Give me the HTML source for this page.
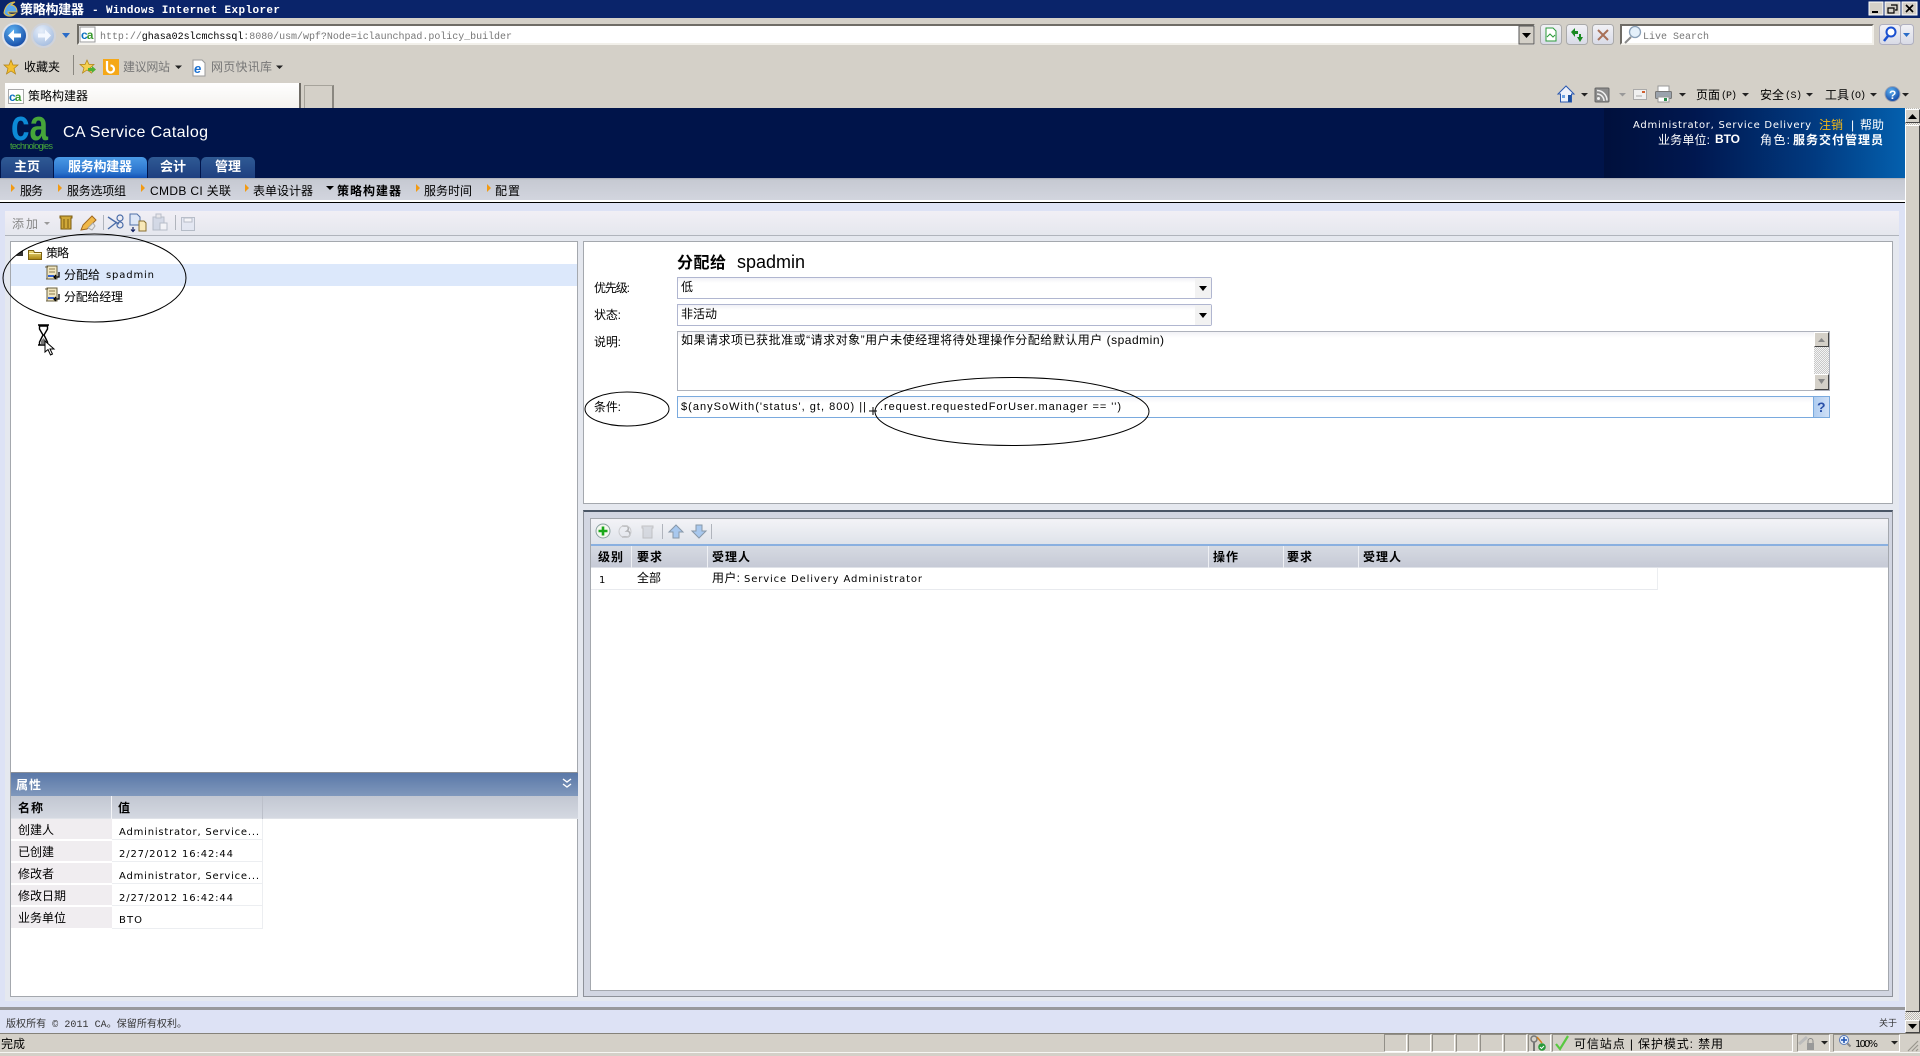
<!DOCTYPE html>
<html lang="zh"><head><meta charset="utf-8"><title>策略构建器</title>
<style>
html,body{margin:0;padding:0;width:1920px;height:1056px;overflow:hidden;background:#d4d0c8}
div{position:absolute;box-sizing:border-box}
svg{position:absolute;left:0;top:0}
text{font-family:"Liberation Sans","WenQuanYi Zen Hei","Noto Sans CJK SC",sans-serif;font-size:12px;fill:#000;white-space:pre}
.m{font-family:"Liberation Mono","WenQuanYi Zen Hei",monospace}
.d{font-family:"DejaVu Sans","WenQuanYi Zen Hei",sans-serif;font-size:10px}
.b{font-weight:bold}.w{fill:#fff}.g{fill:#777}
</style></head><body>
<!-- window chrome -->
<div style="left:0;top:0;width:1920px;height:18px;background:#0a246a"></div>
<div style="left:77px;top:24px;width:1458px;height:21px;background:#fff;border:2px solid #6f6c66;border-right-color:#f2f0ea;border-bottom-color:#f2f0ea"></div>
<div style="left:1620px;top:24px;width:254px;height:21px;background:#fff;border:2px solid #6f6c66;border-right-color:#f2f0ea;border-bottom-color:#f2f0ea"></div>
<div style="left:5px;top:83px;width:296px;height:25px;background:linear-gradient(#fff,#f4f2ee);border-right:2px solid #6f6c66"></div>
<div style="left:304px;top:85px;width:30px;height:23px;border:1px solid #a6a39b;border-bottom:0;border-right:2px solid #8a8780"></div>
<!-- header -->
<div style="left:0;top:108px;width:1905px;height:70px;background:#00144a"></div>
<div style="left:1604px;top:108px;width:301px;height:70px;background:linear-gradient(90deg,#00103c 0,#00174f 30%,#013a80 70%,#0460ae 100%)"></div>
<div style="left:1px;top:157px;width:52px;height:21px;background:linear-gradient(#2f5a94,#1e3f80);border-radius:5px 5px 0 0"></div>
<div style="left:54px;top:157px;width:93px;height:21px;background:linear-gradient(#4a9ae6,#2a72cc 75%,#1250b4);border-radius:5px 5px 0 0"></div>
<div style="left:148px;top:157px;width:52px;height:21px;background:linear-gradient(#2f5a94,#1e3f80);border-radius:5px 5px 0 0"></div>
<div style="left:201px;top:157px;width:54px;height:21px;background:linear-gradient(#2f5a94,#1e3f80);border-radius:5px 5px 0 0"></div>
<!-- sub nav -->
<div style="left:0;top:178px;width:1905px;height:22px;background:linear-gradient(#a8abb4 0,#c6c9d2 8%,#d2d5de 100%)"></div>
<div style="left:0;top:200px;width:1905px;height:2px;background:#fff"></div>
<div style="left:0;top:202px;width:1905px;height:1px;background:#000"></div>
<div style="left:0;top:203px;width:1905px;height:830px;background:#dde2f5"></div>
<!-- content -->
<div style="left:5px;top:211px;width:1894px;height:790px;background:#e5e8ef"></div>
<div style="left:5px;top:211px;width:1894px;height:25px;background:linear-gradient(#f1eff5,#e5e7ee);border-bottom:1px solid #b0b4bc"></div>
<!-- tree panel -->
<div style="left:10px;top:241px;width:568px;height:756px;background:#fff;border:1px solid #a4a8ae"></div>
<div style="left:11px;top:264px;width:566px;height:22px;background:#dce8fb"></div>
<div style="left:11px;top:772px;width:567px;height:24px;background:linear-gradient(#5a78a8,#8098bc);border-top:1px solid #8a8f98"></div>
<div style="left:11px;top:796px;width:567px;height:23px;background:linear-gradient(#c2c7d2,#d4d8e1);border-bottom:1px solid #dfe2e8"></div>
<div style="left:12px;top:796px;width:100px;height:23px;border-right:1px solid #f4f5f8"></div>
<div style="left:112px;top:796px;width:151px;height:23px;border-right:1px solid #bcc0ca"></div>
<div style="left:11px;top:819px;width:101px;height:22px;background:#f0edf0;border-bottom:2px solid #fff"></div>
<div style="left:11px;top:841px;width:101px;height:22px;background:#f0edf0;border-bottom:2px solid #fff"></div>
<div style="left:11px;top:863px;width:101px;height:22px;background:#f0edf0;border-bottom:2px solid #fff"></div>
<div style="left:11px;top:885px;width:101px;height:22px;background:#f0edf0;border-bottom:2px solid #fff"></div>
<div style="left:11px;top:907px;width:101px;height:21px;background:#f0edf0"></div>
<div style="left:112px;top:819px;width:151px;height:110px;border-right:1px solid #eceef1;border-bottom:1px solid #eceef1;background:linear-gradient(#fff 20px,#eceef1 20px,#eceef1 21px,#fff 21px,#fff 42px,#eceef1 42px,#eceef1 43px,#fff 43px,#fff 64px,#eceef1 64px,#eceef1 65px,#fff 65px,#fff 86px,#eceef1 86px,#eceef1 87px,#fff 87px)"></div>
<!-- right top panel -->
<div style="left:583px;top:241px;width:1310px;height:263px;background:#fff;border:1px solid #a4a8ae"></div>
<div style="left:677px;top:277px;width:535px;height:22px;background:linear-gradient(#f1f1f6,#fff 5px);border:1px solid #b0b6d0;border-radius:0 2px 2px 0"></div>
<div style="left:1195px;top:278px;width:16px;height:20px;background:#f2f2f2"></div>
<div style="left:677px;top:304px;width:535px;height:22px;background:linear-gradient(#f1f1f6,#fff 5px);border:1px solid #b0b6d0;border-radius:0 2px 2px 0"></div>
<div style="left:1195px;top:305px;width:16px;height:20px;background:#f2f2f2"></div>
<div style="left:677px;top:331px;width:1153px;height:60px;background:linear-gradient(#f2f2f6,#fff 6px);border:1px solid #aeb2bc"></div>
<div style="left:1814px;top:332px;width:15px;height:58px;background:repeating-conic-gradient(#c8c8c8 0 25%,#f4f4f4 0 50%) 0 0/2px 2px"></div>
<div style="left:1814px;top:332px;width:15px;height:15px;background:#d4d0c8;border:1px solid;border-color:#fff #444 #444 #fff"></div>
<div style="left:1814px;top:374px;width:15px;height:16px;background:#d4d0c8;border:1px solid;border-color:#fff #444 #444 #fff"></div>
<div style="left:677px;top:396px;width:1153px;height:22px;background:linear-gradient(#f2f3f8,#fff 6px);border:1px solid #7aaade"></div>
<div style="left:1813px;top:396px;width:17px;height:22px;background:linear-gradient(90deg,#b0cdf0,#d0e0f6);border:1px solid #7aaade"></div>
<!-- right bottom panel -->
<div style="left:583px;top:510px;width:1310px;height:487px;background:#d2d6e2;border:1px solid #8e929a;border-top:2px solid #4a5666"></div>
<div style="left:590px;top:518px;width:1299px;height:473px;background:#fff;border:1px solid #a4a8ae"></div>
<div style="left:591px;top:519px;width:1297px;height:25px;background:linear-gradient(#f3f3f7,#dfe3ea)"></div>
<div style="left:591px;top:544px;width:1297px;height:2px;background:#8ab0e0"></div>
<div style="left:591px;top:546px;width:1297px;height:22px;background:linear-gradient(#d6dae2,#c6cad6);border-bottom:1px solid #dfe2e8"></div>
<div style="left:631px;top:546px;width:1px;height:22px;background:#eef0f4"></div>
<div style="left:707px;top:546px;width:1px;height:22px;background:#eef0f4"></div>
<div style="left:1208px;top:546px;width:1px;height:22px;background:#eef0f4"></div>
<div style="left:1283px;top:546px;width:1px;height:22px;background:#eef0f4"></div>
<div style="left:1358px;top:546px;width:1px;height:22px;background:#eef0f4"></div>
<div style="left:591px;top:568px;width:1067px;height:22px;border-bottom:1px solid #e8eaee;border-right:1px solid #eceef1"></div>
<!-- footer -->
<div style="left:0;top:1007px;width:1905px;height:3px;background:#98989c"></div>
<!-- page scrollbar -->
<div style="left:1905px;top:108px;width:15px;height:925px;background:repeating-conic-gradient(#bcb9b2 0 25%,#f2f1ee 0 50%) 0 0/2px 2px"></div>
<div style="left:1905px;top:109px;width:15px;height:14px;background:#d4d0c8;border:1px solid;border-color:#fff #444 #444 #fff"></div>
<div style="left:1905px;top:125px;width:15px;height:887px;background:#d4d0c8;border:1px solid;border-color:#fff #444 #444 #fff"></div>
<div style="left:1905px;top:1020px;width:15px;height:13px;background:#d4d0c8;border:1px solid;border-color:#fff #444 #444 #fff"></div>
<!-- status bar -->
<div style="left:0;top:1033px;width:1920px;height:23px;background:#d4d0c8;border-top:1px solid #85827a"></div>
<div style="left:0;top:1052px;width:1920px;height:1px;background:#f6f5f2"></div>
<div style="left:1384px;top:1034px;width:23px;height:18px;border:1px solid;border-color:#928f88 #fff #fff #928f88"></div>
<div style="left:1408px;top:1034px;width:23px;height:18px;border:1px solid;border-color:#928f88 #fff #fff #928f88"></div>
<div style="left:1432px;top:1034px;width:23px;height:18px;border:1px solid;border-color:#928f88 #fff #fff #928f88"></div>
<div style="left:1456px;top:1034px;width:23px;height:18px;border:1px solid;border-color:#928f88 #fff #fff #928f88"></div>
<div style="left:1480px;top:1034px;width:23px;height:18px;border:1px solid;border-color:#928f88 #fff #fff #928f88"></div>
<div style="left:1504px;top:1034px;width:23px;height:18px;border:1px solid;border-color:#928f88 #fff #fff #928f88"></div>
<div style="left:1528px;top:1034px;width:23px;height:18px;border:1px solid;border-color:#928f88 #fff #fff #928f88"></div>
<div style="left:1552px;top:1034px;width:241px;height:18px;border:1px solid;border-color:#928f88 #fff #fff #928f88"></div>
<div style="left:1797px;top:1034px;width:33px;height:18px;border:1px solid;border-color:#928f88 #fff #fff #928f88"></div>
<div style="left:1833px;top:1034px;width:67px;height:18px;border:1px solid;border-color:#928f88 #fff #fff #928f88"></div>

<svg width="1920" height="1056" viewBox="0 0 1920 1056" xmlns="http://www.w3.org/2000/svg">
<defs>
<linearGradient id="btn" x1="0" y1="0" x2="0" y2="1"><stop offset="0" stop-color="#f2f2f6"/><stop offset="1" stop-color="#d8dae6"/></linearGradient>
<radialGradient id="bl" cx=".4" cy=".3" r=".8"><stop offset="0" stop-color="#5cb0f0"/><stop offset="1" stop-color="#0a3c9c"/></radialGradient>
<radialGradient id="gb" cx=".4" cy=".3" r=".8"><stop offset="0" stop-color="#e6eefa"/><stop offset="1" stop-color="#9cb6dc"/></radialGradient>
<linearGradient id="gold" x1="0" y1="0" x2="0" y2="1"><stop offset="0" stop-color="#f0e080"/><stop offset="1" stop-color="#a88410"/></linearGradient>
</defs>

<!-- title bar -->
<text x="20" y="14" textLength="64" class="b w" style="font-size:13px">策略构建器</text>
<text x="92" y="13" textLength="188" class="m b w" style="font-size:11px">- Windows Internet Explorer</text>
<path d="M4 13c1-7 5-11 11-11-2 1-3 2-4 3 4 0 6 3 6 7h-9c0 2 3 3 7 2-3 3-9 3-11-1z" fill="#5aa8f0" stroke="#e8c040" stroke-width="1"/>
<g>
<rect x="1869" y="2" width="14" height="13" fill="#d4d0c8" stroke="#fff"/><path d="M1872 12h6" stroke="#000" stroke-width="2"/>
<rect x="1885" y="2" width="15" height="13" fill="#d4d0c8" stroke="#fff"/><path d="M1891 5h6v5h-2M1888 8h6v5h-6z" stroke="#000" fill="none" stroke-width="1.2"/>
<rect x="1902" y="2" width="15" height="13" fill="#d4d0c8" stroke="#fff"/><path d="M1906 5l7 7M1913 5l-7 7" stroke="#000" stroke-width="1.7"/>
</g>

<!-- back/forward -->
<circle cx="15" cy="35.5" r="12" fill="url(#bl)" stroke="#dfe2ea" stroke-width="2"/>
<path d="M8 35.5l6-6v4h7v4h-7v4z" fill="#fff"/>
<circle cx="43.5" cy="35.5" r="11.5" fill="url(#gb)" stroke="#d0d3da" stroke-width="2"/>
<path d="M51 35.5l-6-6v4h-7v4h7v4z" fill="#f4f8ff"/>
<path d="M62 33h8l-4 5z" fill="#2a6cc8"/>

<!-- address bar -->
<rect x="80" y="27" width="15" height="15" fill="#fff" stroke="#9a9a9a"/>
<text x="81" y="39" class="b" style="font-size:12px;letter-spacing:-1px;fill:#0a70c0">c<tspan style="fill:#3a9a30">a</tspan></text>
<text x="100" y="39" textLength="412" class="m" style="font-size:10px;fill:#777">http://<tspan style="fill:#000">ghasa02slcmchssql</tspan>:8080/usm/wpf?Node=iclaunchpad.policy_builder</text>
<rect x="1519" y="26" width="15" height="18" fill="#d4d0c8" stroke="#555"/><path d="M1522 33h9l-4.500 5z" fill="#000"/>
<rect x="1540.500" y="24.500" width="21" height="20" rx="3" fill="url(#btn)" stroke="#aaa"/>
<path d="M1546 28h7l3 3v10h-10z" fill="#fff" stroke="#2a9a3a"/><path d="M1547 37l3-3 3 3 2-2" fill="none" stroke="#2a9a3a"/>
<rect x="1566.500" y="24.500" width="21" height="20" rx="3" fill="url(#btn)" stroke="#aaa"/>
<path d="M1571 32l4-4v3h3v3h-3v3zM1583 37l-3 5-3-5h2v-3h2v3z" fill="#1a8a20"/>
<rect x="1592.500" y="24.500" width="21" height="20" rx="3" fill="url(#btn)" stroke="#aaa"/>
<path d="M1598 30l10 10M1608 30l-10 10" stroke="#a87058" stroke-width="2"/>
<circle cx="1635" cy="32" r="5.500" fill="#e4f0fa" stroke="#8aa0b8" stroke-width="1.300"/><path d="M1631 37l-6 6" stroke="#8a8a8a" stroke-width="2"/>
<text x="1643" y="39" textLength="66" class="m" style="font-size:10px;fill:#777">Live Search</text>
<rect x="1879.500" y="24.500" width="21" height="20" rx="3" fill="url(#btn)" stroke="#b0b0c0"/>
<rect x="1900.500" y="24.500" width="13" height="20" rx="3" fill="url(#btn)" stroke="#b0b0c0"/>
<circle cx="1891" cy="32" r="4.500" fill="#fff" stroke="#1a50d0" stroke-width="2"/><path d="M1888 36l-4 5" stroke="#1a50d0" stroke-width="2.500"/>
<path d="M1903 33h7l-3.500 4z" fill="#2a6cc8"/>

<!-- favorites row -->
<path d="M11 60l2 5h5l-4 3.500 1.500 5.500-4.500-3-4.500 3 1.500-5.500-4-3.500h5z" fill="#f4c030" stroke="#b08010" stroke-width=".7"/>
<text x="24" y="71" textLength="36">收藏夹</text>
<rect x="73" y="55" width="1" height="20" fill="#8a8780"/>
<path d="M87 60l2 4.500h5l-4 3.500 1.500 5-4.500-3-4.500 3 1.500-5-4-3.500h5z" fill="#f4d050" stroke="#b08010" stroke-width=".7"/>
<path d="M88 68h4v-2l4 3.500-4 3.500v-2h-4z" fill="#50b030"/>
<rect x="103" y="59" width="16" height="16" fill="#f5a818"/><path d="M107 61v8a3.500 3.500 0 1 0 3.500-3.500" fill="none" stroke="#fff" stroke-width="2.200"/>
<text x="123" y="71" textLength="47" class="g">建议网站</text>
<path d="M175 65.500h7l-3.500 3.500z" fill="#222"/>
<path d="M193 60h9l3 3v13h-12z" fill="#fff" stroke="#9a9a9a"/><text x="194" y="73" class="b" style="font-size:13px;fill:#1a70d0;font-style:italic">e</text>
<text x="211" y="71" textLength="61" class="g">网页快讯库</text>
<path d="M276 65.500h7l-3.500 3.500z" fill="#222"/>

<!-- tab -->
<rect x="8.500" y="89.500" width="15" height="14" fill="#fff" stroke="#aaa"/>
<text x="9" y="101" class="b" style="font-size:12px;letter-spacing:-1px;fill:#0a70c0">c<tspan style="fill:#3a9a30">a</tspan></text>
<text x="28" y="100" textLength="60">策略构建器</text>

<!-- right command bar -->
<path d="M1566 86l-8 8h2.500v8h11v-8h2.500z" fill="#eef2fa" stroke="#2a58b0"/><rect x="1568" y="95" width="3" height="7" fill="#1a50a0"/><rect x="1562" y="95" width="3" height="3" fill="#6aa0e0"/>
<path d="M1581 93h7l-3.500 3.500z" fill="#222"/>
<rect x="1595" y="88" width="14" height="14" rx="1" fill="#8c8c8c" stroke="#666"/><circle cx="1598.500" cy="98.500" r="1.500" fill="#f0f0f0"/><path d="M1597 94a7 7 0 0 1 7 7M1597 90.500a10 10 0 0 1 10 10" fill="none" stroke="#f0f0f0" stroke-width="1.500"/>
<path d="M1619 93h7l-3.500 3.500z" fill="#999"/>
<rect x="1633.500" y="89.500" width="13" height="10" fill="#f0f0f0" stroke="#aaa"/><rect x="1642" y="91" width="3" height="2" fill="#d06030"/><path d="M1636 96h6" stroke="#aaa"/>
<rect x="1658" y="86" width="11" height="6" fill="#fff" stroke="#999"/><rect x="1655.500" y="91.500" width="16" height="7" rx="1" fill="#9aa2ac" stroke="#777"/><rect x="1658" y="97" width="11" height="5" fill="#fff" stroke="#999"/><rect x="1664" y="98" width="3" height="3" fill="#2a8a4a"/>
<path d="M1679 93h7l-3.500 3.500z" fill="#222"/>
<text x="1696" y="99" textLength="24">页面</text><text x="1721" y="98" textLength="16" class="m" style="font-size:10px">(P)</text>
<path d="M1742 93h7l-3.500 3.500z" fill="#222"/>
<text x="1760" y="99" textLength="24">安全</text><text x="1785" y="98" textLength="17" class="m" style="font-size:10px">(S)</text>
<path d="M1806 93h7l-3.500 3.500z" fill="#222"/>
<text x="1825" y="99" textLength="24">工具</text><text x="1850" y="98" textLength="16" class="m" style="font-size:10px">(O)</text>
<path d="M1870 93h7l-3.500 3.500z" fill="#222"/>
<circle cx="1892.500" cy="94" r="7.500" fill="url(#bl)" stroke="#9aa0b0"/><text x="1889" y="99" class="b w" style="font-size:12px">?</text>
<path d="M1902 93h7l-3.500 3.500z" fill="#222"/>

<!-- header -->
<text x="11" y="140" textLength="37" lengthAdjust="spacingAndGlyphs" class="b" style="font-size:44px;fill:#0c8ad6">c<tspan style="fill:#46a63a">a</tspan></text>
<text x="10" y="149" textLength="43" style="font-size:9px;fill:#46a63a">technologies</text>
<text x="63" y="137" textLength="145" class="w" style="font-size:16px">CA Service Catalog</text>
<text x="1633" y="128" textLength="178" class="w d">Administrator, Service Delivery</text>
<text x="1819" y="129" textLength="24" style="fill:#f4b818">注销</text>
<text x="1851" y="129" class="w">|</text>
<text x="1860" y="129" textLength="24" class="w">帮助</text>
<text x="1658" y="144" textLength="52" class="w">业务单位:</text>
<text x="1715" y="143" textLength="25" class="b w">BTO</text>
<text x="1760" y="144" textLength="30" class="w">角色:</text>
<text x="1793" y="144" textLength="90" class="b w">服务交付管理员</text>

<!-- tabs -->
<text x="14" y="171" textLength="26" class="b w" style="font-size:13px">主页</text>
<text x="68" y="171" textLength="64" class="b w" style="font-size:13px">服务构建器</text>
<text x="160" y="171" textLength="26" class="b w" style="font-size:13px">会计</text>
<text x="215" y="171" textLength="26" class="b w" style="font-size:13px">管理</text>

<!-- subnav -->
<g fill="#f29a12"><path d="M11 184l4 4-4 4z"/><path d="M58 184l4 4-4 4z"/><path d="M141 184l4 4-4 4z"/><path d="M245 184l4 4-4 4z"/><path d="M416 184l4 4-4 4z"/><path d="M487 184l4 4-4 4z"/></g>
<path d="M326 186h8l-4 4z" fill="#000"/>
<text x="20" y="195" textLength="23">服务</text>
<text x="67" y="195" textLength="59">服务选项组</text>
<text x="150" y="195" textLength="81">CMDB CI 关联</text>
<text x="253" y="195" textLength="60">表单设计器</text>
<text x="337" y="195" textLength="64" class="b">策略构建器</text>
<text x="424" y="195" textLength="48">服务时间</text>
<text x="495" y="195" textLength="25">配置</text>

<!-- main toolbar -->
<text x="12" y="228" textLength="26" style="fill:#888">添加</text>
<path d="M44 222h6l-3 3z" fill="#999"/>
<path d="M60 216h12v2h-1v11h-10v-11h-1z" fill="#d0a838" stroke="#7a5a10"/><path d="M64 219v9M68 219v9" stroke="#7a5a10"/>
<path d="M81 230l2-5 9-9 4 4-9 9z" fill="#f0b848" stroke="#a06820"/><path d="M88 228l5-5 2 3-3 4z" fill="#e8e8e8" stroke="#aaa"/>
<rect x="103" y="215" width="1" height="15" fill="#b0b4bc"/>
<circle cx="120" cy="218" r="3" fill="none" stroke="#4a6ca8" stroke-width="1.200"/><circle cx="120" cy="225" r="3" fill="none" stroke="#4a6ca8" stroke-width="1.200"/><path d="M108 229l9-7M108 217l9 6 2 1" stroke="#4a6ca8" stroke-width="1.400" fill="none"/>
<path d="M130 214h7l3 3v8h-10z" fill="#dde6f6" stroke="#5070a8"/><path d="M139 221h5l2 2v8h-7z" fill="#f8e8b8" stroke="#8a7030"/><path d="M133 227v4M131 229.500l2 2 2-2" stroke="#102060" stroke-width="1.200" fill="none"/>
<g opacity=".45"><rect x="153" y="217" width="11" height="13" fill="#b8c4d8" stroke="#7a8698"/><rect x="156" y="214" width="5" height="4" fill="#e0e0e0" stroke="#7a8698"/><path d="M160 223h7v7h-7z" fill="#fff" stroke="#7a8698"/></g>
<rect x="175" y="215" width="1" height="15" fill="#b0b4bc"/>
<g opacity=".45"><rect x="181.500" y="217.500" width="13" height="13" fill="#dce4f4" stroke="#7a8698"/><rect x="184" y="218" width="8" height="4" fill="#fff" stroke="#7a8698"/></g>

<!-- tree -->
<path d="M16 256l7-6v6z" fill="#333"/>
<path d="M28.500 250.500h5l1 2h7v7h-13z" fill="url(#gold)" stroke="#7a6010"/><rect x="29" y="253" width="12" height="1" fill="#fff6c0"/>
<text x="46" y="257" textLength="23">策略</text>
<path d="M47 266h10v13h-10z" fill="#f0e6c0" stroke="#6a6040"/><path d="M45 267h3M46 279h9" stroke="#6a6040"/><path d="M49 269h6M49 272h6" stroke="#8a7a50"/><rect x="48" y="275" width="6" height="2" fill="#3060d0"/><path d="M59 272v5h-5m2-2l-2 2 2 2" fill="none" stroke="#000" stroke-width="1.300"/>
<g transform="translate(0,22)"><path d="M47 266h10v13h-10z" fill="#f0e6c0" stroke="#6a6040"/><path d="M45 267h3M46 279h9" stroke="#6a6040"/><path d="M49 269h6M49 272h6" stroke="#8a7a50"/><rect x="48" y="275" width="6" height="2" fill="#3060d0"/><path d="M59 272v5h-5m2-2l-2 2 2 2" fill="none" stroke="#000" stroke-width="1.300"/></g>
<text x="64" y="279" textLength="36">分配给</text>
<text x="106" y="278" textLength="48" class="d">spadmin</text>
<text x="64" y="301" textLength="59">分配给经理</text>

<!-- hourglass and cursor -->
<path d="M38 325h11M38 345h11M39.500 326v3l3.500 6-3.500 7v3h8v-3l-3.500-7 3.500-6v-3z" fill="#fff" stroke="#000" stroke-width="1.400"/>
<path d="M41 341l2.500-3 2.500 3v3h-5z" fill="#777"/>
<path d="M45 341v11l3-2.500 2.500 5.500 2-1-2.500-5h4z" fill="#fff" stroke="#000"/>

<!-- properties -->
<text x="16" y="789" textLength="25" class="b w">属性</text>
<path d="M563 779l4 3 4-3M563 784l4 3 4-3" fill="none" stroke="#fff" stroke-width="1.400"/>
<text x="18" y="812" textLength="25" class="b">名称</text>
<text x="118" y="812" textLength="13" class="b">值</text>
<text x="18" y="834" textLength="36">创建人</text>
<text x="18" y="856" textLength="36">已创建</text>
<text x="18" y="878" textLength="36">修改者</text>
<text x="18" y="900" textLength="48">修改日期</text>
<text x="18" y="922" textLength="48">业务单位</text>
<text x="119" y="835" textLength="140" class="d">Administrator, Service...</text>
<text x="119" y="857" textLength="114" class="d">2/27/2012 16:42:44</text>
<text x="119" y="879" textLength="140" class="d">Administrator, Service...</text>
<text x="119" y="901" textLength="114" class="d">2/27/2012 16:42:44</text>
<text x="119" y="923" textLength="23" class="d">BTO</text>

<!-- form -->
<text x="677" y="268" textLength="49" class="b" style="font-size:16px">分配给</text>
<text x="737" y="268" style="font-size:18px">spadmin</text>
<text x="594" y="292" textLength="36">优先级:</text>
<text x="594" y="319" textLength="27">状态:</text>
<text x="594" y="346" textLength="27">说明:</text>
<text x="594" y="411" textLength="27">条件:</text>
<text x="681" y="291" textLength="12">低</text>
<text x="681" y="318" textLength="36">非活动</text>
<path d="M1199 286h8l-4 5z" fill="#000"/><path d="M1199 313h8l-4 5z" fill="#000"/>
<text x="681" y="344" textLength="483">如果请求项已获批准或“请求对象”用户未使经理将待处理操作分配给默认用户 (spadmin)</text>
<path d="M1818 342l3.500-4 3.500 4z" fill="#888"/><path d="M1818 379h7l-3.500 5z" fill="#888"/>
<text x="681" y="410" textLength="185" style="font-size:11px">$(anySoWith('status', gt, 800) ||</text>
<path d="M869 411h8M873 407v8" stroke="#000"/>
<text x="880" y="410" textLength="241" style="font-size:11px">.request.requestedForUser.manager == '')</text>
<text x="1817" y="412" class="b" style="font-size:14px;fill:#2a50a8">?</text>

<!-- assignment toolbar -->
<circle cx="603" cy="531" r="7" fill="#f4f8f0" stroke="#8aa0a0"/><path d="M603 526.500v9M598.500 531h9" stroke="#1aa81a" stroke-width="2.600"/>
<g opacity=".5"><path d="M622 526h5a3 3 0 0 1 0 5a3 3 0 0 1 0 6h-5" fill="none" stroke="#777" stroke-width="1.500"/><circle cx="625" cy="531.500" r="6" fill="none" stroke="#aaa"/>
<path d="M642 526h11v2h-1v10h-9v-10h-1z" fill="#c4c8d0" stroke="#999"/></g>
<rect x="662" y="524" width="1" height="15" fill="#b0b4bc"/>
<path d="M676 525l7 7h-4v6h-6v-6h-4z" fill="#a8c8ee" stroke="#8898a8"/>
<path d="M699 538l7-7h-4v-6h-6v6h-4z" fill="#a8c8ee" stroke="#8898a8"/>
<rect x="711" y="524" width="1" height="15" fill="#b0b4bc"/>

<!-- assignment table -->
<text x="598" y="561" textLength="25" class="b">级别</text>
<text x="637" y="561" textLength="25" class="b">要求</text>
<text x="712" y="561" textLength="38" class="b">受理人</text>
<text x="1213" y="561" textLength="25" class="b">操作</text>
<text x="1287" y="561" textLength="25" class="b">要求</text>
<text x="1363" y="561" textLength="38" class="b">受理人</text>
<text x="599" y="583" class="d">1</text>
<text x="637" y="582" textLength="24">全部</text>
<text x="712" y="582" textLength="28">用户:</text>
<text x="744" y="582" textLength="178" class="d">Service Delivery Administrator</text>

<!-- footer + status -->
<text x="6" y="1027" textLength="181" class="m" style="font-size:10px;fill:#333">版权所有 © 2011 CA。保留所有权利。</text>
<text x="1879" y="1026" textLength="18" style="font-size:9px;fill:#333">关于</text>
<path d="M1908 119l4.500-5 4.500 5z" fill="#000"/>
<path d="M1908 1024h9l-4.500 5z" fill="#000"/>
<text x="1" y="1048" textLength="24">完成</text>
<circle cx="1534" cy="1039" r="3" fill="none" stroke="#777" stroke-width="1.500"/><path d="M1534 1042v9" stroke="#777" stroke-width="2"/><path d="M1537 1037l5 6" stroke="#d08020" stroke-width="1.500"/>
<circle cx="1542" cy="1047" r="3.800" fill="#2a9a3a"/><path d="M1540 1047l1.500 1.500 2.500-2.500" stroke="#fff" fill="none"/>
<path d="M1556 1044l4 5 8-13" fill="none" stroke="#58c840" stroke-width="2.200"/>
<text x="1574" y="1048" textLength="149">可信站点 | 保护模式: 禁用</text>
<path d="M1799 1044l8-7" stroke="#bbb" stroke-width="3"/><rect x="1807" y="1043" width="7" height="7" fill="#999"/><path d="M1808 1043v-2a2.500 2.500 0 0 1 5 0v2" fill="none" stroke="#888"/>
<path d="M1821 1041h7l-3.500 3.500z" fill="#222"/>
<circle cx="1844" cy="1040" r="4.500" fill="#e8f0fc" stroke="#5a7ab8"/><path d="M1841 1040h6M1844 1037v6" stroke="#1a50b0" stroke-width="1.500"/><path d="M1847.500 1043.500l3 3" stroke="#888" stroke-width="2"/>
<text x="1855" y="1047" textLength="23" class="d">100%</text>
<path d="M1891 1041h7l-3.500 3.500z" fill="#222"/>
<path d="M1908 1051l10-10M1912 1051l6-6M1916 1051l2-2" stroke="#9a978f" stroke-width="1.200"/>

<!-- hand-drawn ellipses -->
<ellipse cx="94.500" cy="278" rx="91.500" ry="44" fill="none" stroke="#000"/>
<ellipse cx="627" cy="409" rx="42" ry="17" fill="none" stroke="#000"/>
<ellipse cx="1012" cy="411.500" rx="137" ry="34" fill="none" stroke="#000"/>
</svg>
</body></html>
